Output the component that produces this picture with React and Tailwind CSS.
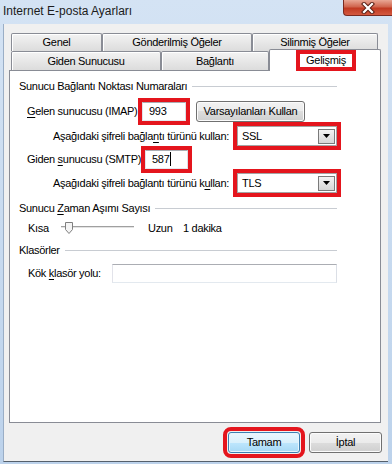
import React from 'react'

const U = ({ children }) => <span className="underline underline-offset-[2px] decoration-1">{children}</span>

const GroupHeader = ({ children }) => (
  <div className="h-[14px] w-[318px] flex items-center">
    <span className="whitespace-nowrap">{children}</span>
    <div className="flex-1 h-px bg-[#c8ccd2] ml-[5px]" />
  </div>
)

const TextBox = ({ value, className = '', caret = false }) => (
  <div className={`h-[19px] bg-white border border-[#abadb3] border-l-[#e2e3ea] border-r-[#dbdfe6] border-b-[#e3e9ef] flex items-center pl-[6px] ${className}`}>
    {value}
    {caret && <span className="w-px h-[14px] bg-black ml-px" />}
  </div>
)

const Combo = ({ value }) => (
  <div className="w-[100px] h-[20px] bg-white border border-[#a4a4a4] flex items-center justify-between pl-[4px] pr-[1px] outline-[4px] outline-[#e4151d] outline-offset-0">
    <span>{value}</span>
    <div className="w-[17px] h-[15px] border border-[#7a7a7a] bg-gradient-to-b from-[#f3f3f3] to-[#d6d6d6] flex items-center justify-center">
      <svg width="7" height="4" viewBox="0 0 7 4"><path d="M0 0h7L3.5 4z" fill="#000" /></svg>
    </div>
  </div>
)

const WinButton = ({ children, className = '', primary = false }) => (
  <div
    className={`h-[21px] rounded-[3px] border flex items-center justify-center ${
      primary
        ? 'border-[#3c7fb1] bg-[linear-gradient(#eaf6fd,#d9f0fc_50%,#bee6fd_50%,#a7d9f5)] shadow-[inset_0_0_0_1px_#e6f5fd]'
        : 'border-[#707070] bg-[linear-gradient(#f2f2f2,#ebebeb_50%,#dddddd_50%,#cfcfcf)] shadow-[inset_0_0_0_1px_#fbfbfb]'
    } ${className}`}
  >
    {children}
  </div>
)

const BackTab = ({ w, children }) => (
  <div
    style={{ width: w }}
    className="h-full shrink-0 border border-b-0 border-[#898c95] bg-gradient-to-b from-[#f3f3f3] to-[#dcdcdc] shadow-[inset_1px_1px_0_#ffffff] flex items-center justify-center rounded-t-[2px]"
  >
    {children}
  </div>
)

export default function App() {
  return (
    <div className="w-[392px] h-[464px] overflow-hidden flex flex-col bg-gradient-to-b from-[#d4e3f4] to-[#bcd2eb] font-['Liberation_Sans',Arial,sans-serif] text-[11px] tracking-[-0.3px] leading-none text-black">
      {/* title bar */}
      <div className="h-[24px] shrink-0 flex items-start justify-between">
        <div className="pl-[3px] pt-[4px] text-[12px] tracking-normal leading-[14px] text-[#1b1b1b]">Internet E-posta Ayarları</div>
        <div className="w-[49px] h-[16px] rounded-bl-[4px] border border-t-0 border-r-0 border-[#7a2a20] bg-[linear-gradient(#e9a795,#d0654e_45%,#c13a22_55%,#d4593f)] flex items-center justify-center">
          <svg width="14" height="12" viewBox="0 0 14 12">
            <path d="M3 2l8 8M11 2l-8 8" stroke="#5b2016" strokeWidth="4.2" strokeLinecap="square" />
            <path d="M3 2l8 8M11 2l-8 8" stroke="#ffffff" strokeWidth="2.2" strokeLinecap="square" />
          </svg>
        </div>
      </div>

      {/* client area */}
      <div className="flex-1 ml-[3px] mr-[4px] mb-[2px] bg-[#f0f0f0] border-l border-[#9aaec6] border-b border-b-[#55606c] pt-[9px] pl-[5px] pr-[7px] flex flex-col">
        {/* tab rows */}
        <div className="pl-[2px] flex flex-col">
          <div className="h-[18px] flex">
            <BackTab w={91}>Genel</BackTab>
            <BackTab w={150}>Gönderilmiş Öğeler</BackTab>
            <BackTab w={126}>Silinmiş Öğeler</BackTab>
          </div>
          <div className="h-[19px] flex">
            <BackTab w={150}>Giden Sunucusu</BackTab>
            <BackTab w={108}>Bağlantı</BackTab>
            <div className="w-[112px] h-[22px] -mt-[2px] relative z-10 bg-white border border-b-0 border-[#898c95] rounded-t-[2px] flex items-center justify-center">
              <span className="h-[13px] px-[6px] ml-[2px] flex items-center outline-[4px] outline-[#e4151d]">Gelişmiş</span>
            </div>
          </div>
        </div>

        {/* panel */}
        <div className="w-[372px] h-[353px] bg-white border border-[#898c95] pl-[9px] pt-[8px] flex flex-col">
          <GroupHeader>Sunucu Bağlantı Noktası Numaraları</GroupHeader>

          <div className="mt-[8px] h-[20px] flex items-center">
            <div className="w-[123px] pl-[8px] whitespace-nowrap"><U>G</U>elen sunucusu (IMAP):</div>
            <TextBox value="993" className="w-[44px] outline-[4px] outline-[#e4151d]" />
            <WinButton className="ml-[10px] w-[109px] h-[20px]">Varsayılanları Kullan</WinButton>
          </div>

          <div className="mt-[5px] h-[20px] flex items-center">
            <div className="w-[210px] text-right whitespace-nowrap">Aşağıdaki şifreli bağla<U>n</U>tı türünü kullan:</div>
            <div className="ml-[8px]"><Combo value="SSL" /></div>
          </div>

          <div className="mt-[3px] h-[20px] flex items-center">
            <div className="w-[126px] pl-[8px] whitespace-nowrap">Giden <U>s</U>unucusu (SMTP):</div>
            <TextBox value="587" caret className="w-[43px] outline-[4px] outline-[#e4151d]" />
          </div>

          <div className="mt-[4px] h-[20px] flex items-center">
            <div className="w-[210px] text-right whitespace-nowrap">Aşağıdaki şifreli bağlantı türünü k<U>u</U>llan:</div>
            <div className="ml-[8px]"><Combo value="TLS" /></div>
          </div>

          <div className="mt-[8px]">
            <GroupHeader>Sunucu <U>Z</U>aman Aşımı Sayısı</GroupHeader>
          </div>

          <div className="mt-[3px] h-[20px] flex items-center">
            <div className="w-[42px] pl-[9px]">Kısa</div>
            <div className="w-[73px] h-[12px] relative">
              <div className="absolute left-0 right-0 top-[4px] h-[3px] border-t border-[#a0a0a0] border-b border-b-[#ffffff] bg-[#e3e3e3]" />
              <svg className="absolute left-[4px] top-0" width="8" height="12" viewBox="0 0 8 12">
                <path d="M0.5 0.5h7v7L4 11.5 0.5 7.5z" fill="#f4f4f4" stroke="#7f7f7f" />
              </svg>
            </div>
            <div className="ml-[14px] w-[35px]">Uzun</div>
            <div>1 dakika</div>
          </div>

          <div className="mt-[5px]">
            <GroupHeader>Klasörler</GroupHeader>
          </div>

          <div className="mt-[6px] h-[20px] flex items-center">
            <div className="w-[93px] pl-[9px] whitespace-nowrap">Kök <U>k</U>lasör yolu:</div>
            <TextBox value="" className="w-[225px]" />
          </div>
        </div>

        {/* buttons */}
        <div className="mt-[9px] flex justify-end">
          <WinButton primary className="w-[72px] outline-[4px] outline-[#e4151d] outline-offset-[1px]">Tamam</WinButton>
          <WinButton className="ml-[9px] w-[73px] -mr-px">İptal</WinButton>
        </div>
      </div>
    </div>
  )
}
